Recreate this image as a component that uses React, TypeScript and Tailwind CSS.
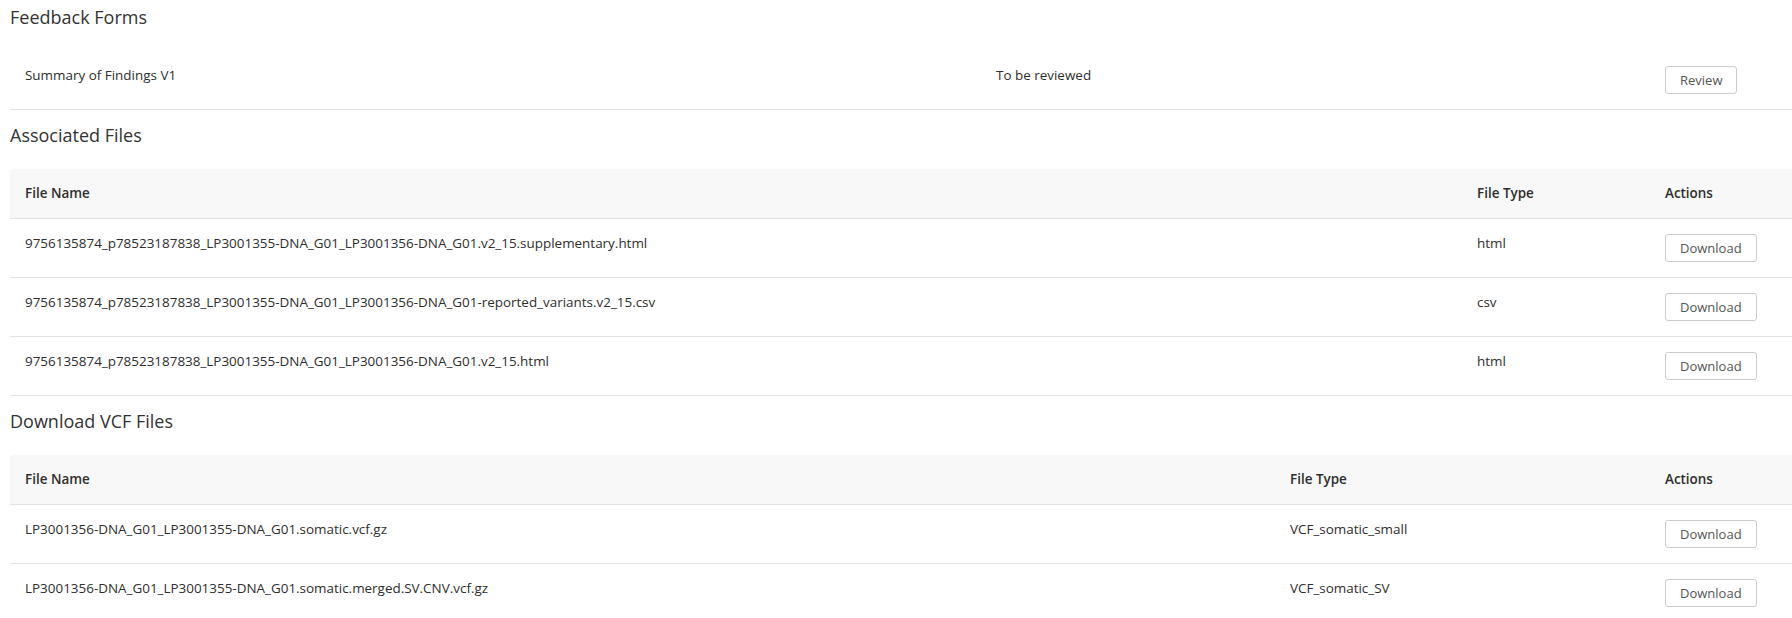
import React from 'react';

const associatedFiles = [
  { name: '9756135874_p78523187838_LP3001355-DNA_G01_LP3001356-DNA_G01.v2_15.supplementary.html', type: 'html' },
  { name: '9756135874_p78523187838_LP3001355-DNA_G01_LP3001356-DNA_G01-reported_variants.v2_15.csv', type: 'csv' },
  { name: '9756135874_p78523187838_LP3001355-DNA_G01_LP3001356-DNA_G01.v2_15.html', type: 'html' },
];

const vcfFiles = [
  { name: 'LP3001356-DNA_G01_LP3001355-DNA_G01.somatic.vcf.gz', type: 'VCF_somatic_small' },
  { name: 'LP3001356-DNA_G01_LP3001355-DNA_G01.somatic.merged.SV.CNV.vcf.gz', type: 'VCF_somatic_SV' },
];

const OutlineButton: React.FC<{ label: string }> = ({ label }) => (
  <button
    type="button"
    className="inline-flex h-[28px] items-center rounded-[3px] border border-[#cccccc] bg-white px-[14px] text-[13px] leading-[19px] text-[#555555] hover:bg-[#f5f5f5]"
  >
    {label}
  </button>
);

const SectionTitle: React.FC<{ children: React.ReactNode }> = ({ children }) => (
  <h2 className="mb-[16px] flex h-[35px] items-center text-[18px] font-normal text-[#333333]">{children}</h2>
);

const FileTable: React.FC<{ rows: { name: string; type: string }[]; nameWidth: string; typeWidth: string }> = ({
  rows,
  nameWidth,
  typeWidth,
}) => (
  <table className="w-full table-fixed border-collapse">
    <colgroup>
      <col className={nameWidth} />
      <col className={typeWidth} />
      <col className="w-[142px]" />
    </colgroup>
    <thead>
      <tr className="border-b border-[#e3e3e3] bg-[#f8f8f8]">
        <th className="rounded-tl-[4px] p-[15px] text-left align-top font-semibold">File Name</th>
        <th className="p-[15px] text-left align-top font-semibold">File Type</th>
        <th className="p-[15px] text-left align-top font-semibold">Actions</th>
      </tr>
    </thead>
    <tbody>
      {rows.map((file) => (
        <tr key={file.name} className="border-b border-[#e3e3e3]">
          <td className="p-[15px] align-top whitespace-nowrap">{file.name}</td>
          <td className="p-[15px] align-top">{file.type}</td>
          <td className="p-[15px] align-top">
            <OutlineButton label="Download" />
          </td>
        </tr>
      ))}
    </tbody>
  </table>
);

const App: React.FC = () => {
  return (
    <div className="min-h-screen overflow-hidden bg-white pl-[10px] font-['Open_Sans',sans-serif] text-[13.45px] leading-[19px] text-[#2e2e2e]">
      {/* Feedback Forms */}
      <section>
        <SectionTitle>Feedback Forms</SectionTitle>
        <table className="w-full table-fixed border-collapse">
          <colgroup>
            <col className="w-[971px]" />
            <col className="w-[669px]" />
            <col className="w-[142px]" />
          </colgroup>
          <tbody>
            <tr className="border-b border-[#e3e3e3]">
              <td className="p-[15px] align-top">Summary of Findings V1</td>
              <td className="p-[15px] align-top">To be reviewed</td>
              <td className="p-[15px] align-top">
                <OutlineButton label="Review" />
              </td>
            </tr>
          </tbody>
        </table>
      </section>

      {/* Associated Files */}
      <section className="mt-2">
        <SectionTitle>Associated Files</SectionTitle>
        <FileTable rows={associatedFiles} nameWidth="w-[1452px]" typeWidth="w-[188px]" />
      </section>

      {/* Download VCF Files */}
      <section className="mt-2">
        <SectionTitle>Download VCF Files</SectionTitle>
        <FileTable rows={vcfFiles} nameWidth="w-[1265px]" typeWidth="w-[375px]" />
      </section>
    </div>
  );
};

export default App;
